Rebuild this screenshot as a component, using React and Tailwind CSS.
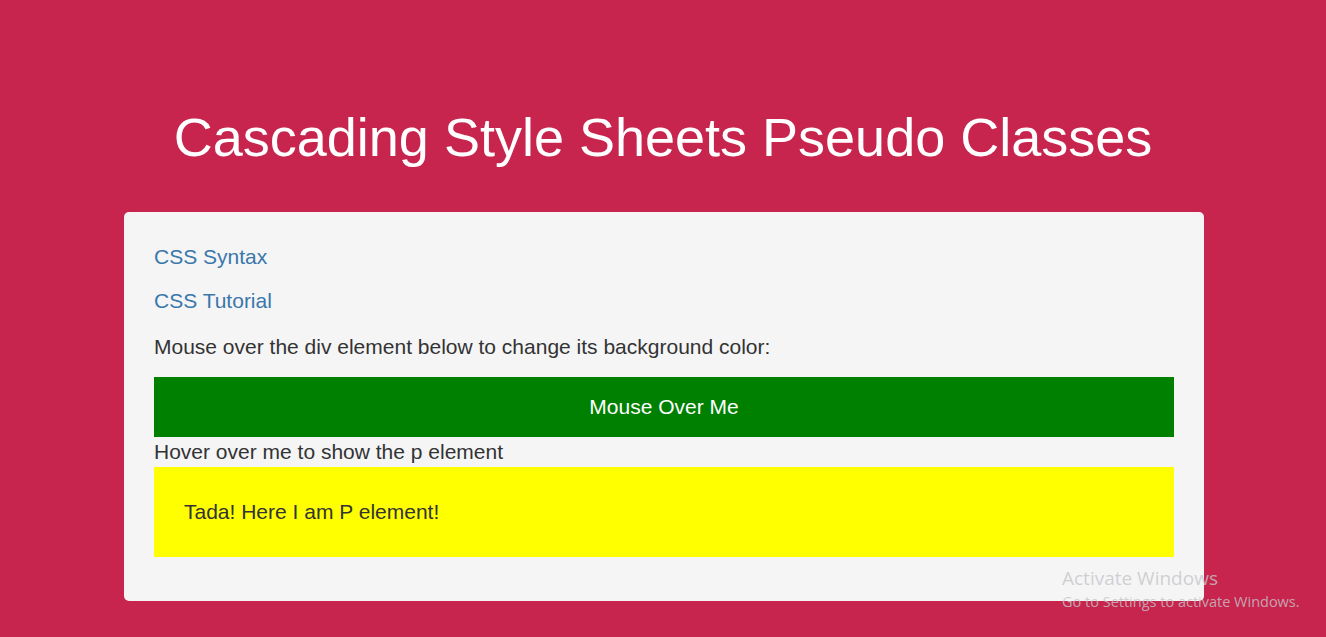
export default function App() {
  return (
    <div className="min-h-[637px] bg-[#c7254e] font-['Liberation_Sans',Arial,sans-serif] text-[#333] relative overflow-hidden">
      <h1 className="text-white text-[54px] leading-[64px] text-center pt-[105px]">
        Cascading Style Sheets Pseudo Classes
      </h1>

      <div className="ml-[124px] mt-[43px] w-[1080px] bg-[#f5f5f6] rounded-[5px] px-[30px] pt-[31px] pb-[44px] text-[21px] leading-[28px]">
        <p className="mb-[16px]">
          <a href="#" className="text-[#3a77ab]">CSS Syntax</a>
        </p>
        <p className="mb-[18px]">
          <a href="#" className="text-[#3a77ab]">CSS Tutorial</a>
        </p>
        <p className="mb-[16px]">Mouse over the div element below to change its background color:</p>

        <div className="bg-[#008000] text-white h-[60px] flex items-center justify-center">
          Mouse Over Me
        </div>

        <div>
          <p className="leading-[30px]">Hover over me to show the p element</p>
          <p className="bg-[#ffff00] px-[30px] py-[30px] leading-[30px]">Tada! Here I am P element!</p>
        </div>
      </div>

      <div className="absolute left-[1062px] top-[566px] font-['Open_Sans','Noto_Sans',sans-serif] text-[#c5c5c8]/80 pointer-events-none">
        <div className="text-[19px] leading-[25px]">Activate Windows</div>
        <div className="text-[14.5px] leading-[21px]">Go to Settings to activate Windows.</div>
      </div>
    </div>
  );
}
